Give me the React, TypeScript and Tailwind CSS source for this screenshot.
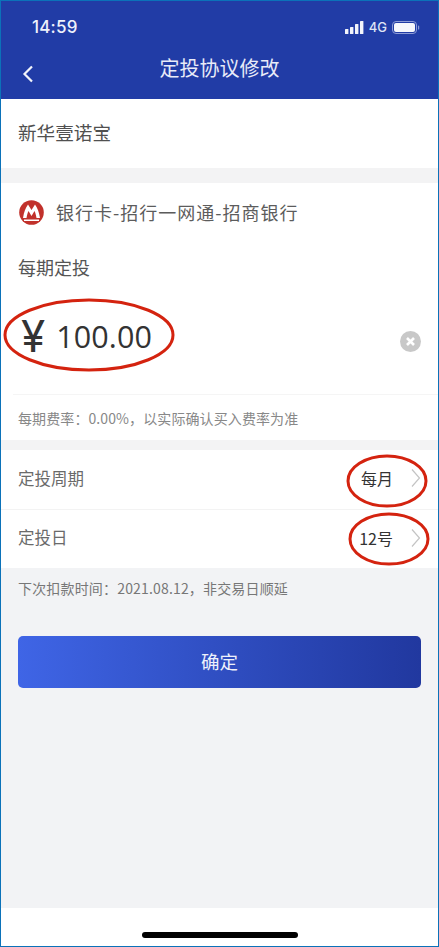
const font = { fontFamily: '"Noto Sans CJK SC", sans-serif' };
const Chevron = () => (
  <svg width="10" height="20" viewBox="0 0 10 20" fill="none" className="shrink-0">
    <path d="M1 1.5 L8.5 10 L1 18.5" stroke="#c4c4c4" strokeWidth="1.2" />
  </svg>
);
const Ring = ({ className, w, h }: { className: string; w: number; h: number }) => (
  <svg width={w} height={h} viewBox={`0 0 ${w} ${h}`} fill="none" className={`absolute ${className}`}>
    <ellipse cx={w / 2} cy={h / 2} rx={w / 2 - 2} ry={h / 2 - 2} stroke="#d4230f" strokeWidth="3" />
  </svg>
);
export default function App() {
  return (
    <div className="relative w-[439px] h-[947px] overflow-hidden bg-white border border-[#0b72b9] flex flex-col" style={font}>
      <header className="h-[98px] bg-[#213ca6] text-white shrink-0 flex flex-col">
        <div className="h-[44px] flex items-start justify-between pl-[31px] pr-[18px] pt-[16px]">
          <span className="text-[17px] leading-[20px] font-medium font-['Inter',sans-serif] tracking-[0.2px] text-[#eef1fb]">14:59</span>
          <div className="flex items-center gap-[4px] mt-[3px]">
            <svg width="20" height="13" viewBox="0 0 20 13" fill="#f2f4fb">
              <rect x="0" y="8" width="3.4" height="5" rx="0.6" />
              <rect x="5" y="6" width="3.4" height="7" rx="0.6" />
              <rect x="10" y="3" width="3.4" height="10" rx="0.6" />
              <rect x="15" y="0" width="3.4" height="13" rx="0.6" />
            </svg>
            <span className="text-[13px] leading-[14px] font-medium font-['Inter',sans-serif] text-[#dfe4f5]">4G</span>
            <svg width="28" height="13" viewBox="0 0 28 13" fill="none" className="ml-[1px]">
              <rect x="0.5" y="0.5" width="24" height="12" rx="3.5" stroke="#8d9bd6" />
              <rect x="2" y="2" width="21" height="9" rx="2" fill="#f6f7fc" />
              <rect x="26" y="4.5" width="1.2" height="4" rx="0.6" fill="#8d9bd6" />
            </svg>
          </div>
        </div>
        <div className="relative flex-1 flex items-center justify-center pb-[8px]">
          <svg width="12" height="18" viewBox="0 0 12 18" fill="none" className="absolute left-[21px] top-[20px]">
            <path d="M10 1.5 L2.5 9 L10 16.5" stroke="#f2f4fb" strokeWidth="2.2" />
          </svg>
          <h1 className="text-[20px] leading-[28px] font-normal text-[#e8ebf8]">定投协议修改</h1>
        </div>
      </header>

      <section className="h-[69px] shrink-0 bg-white flex items-center pl-[17px] pb-[4px] text-[18.6px] text-[#505050]">新华壹诺宝</section>
      <div className="h-[15px] shrink-0 bg-[#f3f3f4]" />

      <section className="h-[257px] shrink-0 bg-white flex flex-col">
        <div className="h-[58px] flex items-center pl-[18px] gap-[12px]">
          <svg width="25" height="25" viewBox="0 0 25 25">
            <circle cx="12.5" cy="12.5" r="12.3" fill="#c1312b" />
            <path d="M4 18 C5 12 6.5 8 9 4.5 L12.5 10 L16 4.5 C18.5 8 20 12 21 18 L17.5 18 C17 15 16.5 13 15.5 11 L12.5 16 L9.5 11 C8.5 13 8 15 7.5 18 Z" fill="#fff" />
            <path d="M5 19.5 H20 V21 H5 Z" fill="#fff" />
          </svg>
          <span className="text-[18px] leading-[24px] text-[#5c5c5c] tracking-[1px]">银行卡-招行一网通-招商银行</span>
        </div>
        <div className="pl-[17px] pt-[14px] h-[55px] text-[18px] leading-[24px] text-[#555]">每期定投</div>
        <div className="h-[98px] relative flex items-center pl-[20px] pr-[18px] pb-[18px]">
          <span className="text-[44px] leading-[48px] text-[#333] font-['Inter',sans-serif] font-normal mr-[11px]">¥</span>
          <span className="text-[30.5px] leading-[48px] text-[#333] font-['Open_Sans',sans-serif] tracking-[0.1px]">100.00</span>
          <svg width="21" height="21" viewBox="0 0 21 21" className="ml-auto mt-[10px] mr-[-1px]">
            <circle cx="10.5" cy="10.5" r="10.5" fill="#c8c8c8" />
            <path d="M7 7 L14 14 M14 7 L7 14" stroke="#fff" strokeWidth="2.6" />
          </svg>
        </div>
        <div className="ml-[12px] border-t border-[#f5f5f5] flex-1 flex items-center pl-[5px] pt-[2px] text-[14px] tracking-[0.1px] text-[#888]">每期费率：0.00%，以实际确认买入费率为准</div>
      </section>
      <div className="h-[10px] shrink-0 bg-[#f3f3f4]" />

      <section className="h-[118px] shrink-0 bg-white flex flex-col">
        <div className="h-[59px] flex items-center pl-[17px] pr-[17px] pb-[3px] text-[16.5px] text-[#6a6a6a]">
          <span>定投周期</span>
          <span className="ml-auto mr-[18px] text-[#333] text-[16px]">每月</span>
          <Chevron />
        </div>
        <div className="h-[59px] border-t border-[#f3f3f3] flex items-center pl-[17px] pr-[17px] pb-[3px] text-[16.5px] text-[#6a6a6a]">
          <span>定投日</span>
          <span className="ml-auto mr-[18px] text-[#333] text-[16px]">12号</span>
          <Chevron />
        </div>
      </section>

      <main className="flex-1 bg-[#f2f3f5] flex flex-col">
        <p className="pl-[17px] pt-[9px] text-[14px] tracking-[0.17px] leading-[22px] text-[#777]">下次扣款时间：2021.08.12，非交易日顺延</p>
        <button className="mt-[37px] mx-[17px] h-[52px] rounded-[5px] bg-gradient-to-r from-[#3f65e6] to-[#21389f] text-[#eef1fb] text-[18.5px]">确定</button>
      </main>
      <footer className="h-[38px] shrink-0 bg-white flex justify-center items-end pb-[8px]">
        <div className="w-[156px] h-[6px] rounded-full bg-black" />
      </footer>

      <Ring className="left-[2px] top-[297px]" w={172} h={74} />
      <Ring className="left-[345px] top-[453px]" w={82} h={54} />
      <Ring className="left-[347px] top-[511px]" w={82} h={54} />
    </div>
  );
}
